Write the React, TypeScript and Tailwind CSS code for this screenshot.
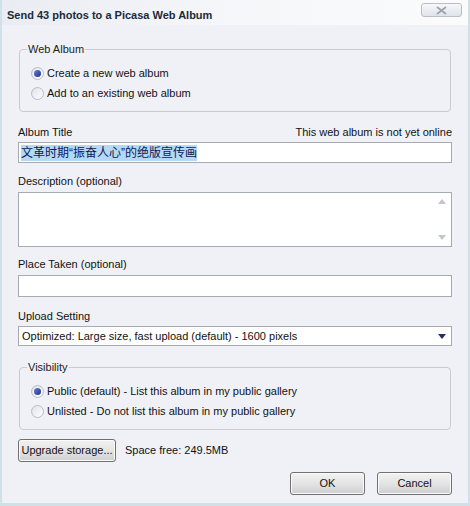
import React from "react";

const font = { fontFamily: '"Liberation Sans", "Noto Sans CJK SC", Arial, sans-serif' };

function Radio({ checked, label }: { checked?: boolean; label: string }) {
  return (
    <div className="flex h-[20px] items-center gap-[3px] pl-[11px]">
      <span className="flex h-[13px] w-[13px] items-center justify-center rounded-full border border-[#b8bcc4] bg-gradient-to-br from-[#dfe2e8] to-white">
        {checked && (
          <span className="h-[7px] w-[7px] rounded-full bg-gradient-to-br from-[#6f7fd6] to-[#1c2f8a]" />
        )}
      </span>
      <span className="text-[11px] text-[#111]">{label}</span>
    </div>
  );
}

function Group({ title, children, className }: { title: string; children: React.ReactNode; className?: string }) {
  return (
    <div className={"relative ml-[1px] w-[432px] rounded-[4px] border border-[#c9cbd0] pt-[13px] " + (className ?? "")}>
      <span className="absolute -top-[8px] left-[7px] bg-[#f0f1f7] px-[1px] text-[11px] leading-[14px] text-[#222]">
        {title}
      </span>
      {children}
    </div>
  );
}

function Button({ children, className }: { children: React.ReactNode; className?: string }) {
  return (
    <button
      className={
        "flex items-center justify-center whitespace-nowrap rounded-[3px] border border-[#707070] bg-gradient-to-b from-[#f2f2f2] via-[#e4e4e4] to-[#cfcfcf] text-[11px] text-[#111] shadow-[inset_0_0_0_1px_#fbfbfb] " +
        (className ?? "")
      }
    >
      {children}
    </button>
  );
}

export default function App() {
  return (
    <div className="h-[506px] w-[470px] overflow-hidden bg-[#f0f1f7]" style={font}>
      <div className="flex h-full flex-col border-x-[2px] border-b-[3px] border-[#cfe0e6]">
        <div className="relative flex h-[25px] items-center bg-gradient-to-r from-[#e9ecf2] via-[#f6f7fa] to-[#fbfbfc] pl-[5px] pt-[5px]">
          <span className="text-[11px] font-bold text-[#1b2a3a]">Send 43 photos to a Picasa Web Album</span>
          <div className="absolute right-[6px] top-[3px] flex h-[14px] w-[41px] items-center justify-center rounded-[3px] border border-[#b9bec6] bg-gradient-to-b from-[#f7f8fa] to-[#dfe3ea]">
            <svg width="11" height="9" viewBox="0 0 11 9">
              <path d="M1 1 L10 8 M10 1 L1 8" stroke="#9aa2ad" strokeWidth="1.6" fill="none" />
            </svg>
          </div>
        </div>

        <div className="flex flex-col pl-[16px]">
          <Group title="Web Album" className="mt-[24px] h-[63px]">
            <Radio checked label="Create a new web album" />
            <Radio label="Add to an existing web album" />
          </Group>

          <div className="mt-[13px] flex w-[434px] justify-between text-[11px] leading-[14px] text-[#111]">
            <span>Album Title</span>
            <span>This web album is not yet online</span>
          </div>
          <div className="mt-[3px] flex h-[21px] w-[434px] items-center border border-[#a5abb3] bg-white px-[2px]">
            <span className="bg-[#b5d8f5] text-[12px] leading-[16px] text-[#0a1a5a]">文革时期“振奋人心”的绝版宣传画</span>
          </div>

          <div className="mt-[11px] text-[11px] leading-[14px] text-[#111]">Description (optional)</div>
          <div className="mt-[4px] flex h-[55px] w-[434px] justify-end border border-[#a5abb3] bg-white">
            <div className="flex w-[16px] flex-col items-center justify-between py-[6px] pr-[2px]">
              <svg width="8" height="5" viewBox="0 0 8 5"><path d="M0 5 L4 0 L8 5 Z" fill="#c3c6cc" /></svg>
              <svg width="8" height="5" viewBox="0 0 8 5"><path d="M0 0 L4 5 L8 0 Z" fill="#c3c6cc" /></svg>
            </div>
          </div>

          <div className="mt-[10px] text-[11px] leading-[14px] text-[#111]">Place Taken (optional)</div>
          <div className="mt-[4px] h-[22px] w-[434px] border border-[#a5abb3] bg-white" />

          <div className="mt-[12px] text-[11px] leading-[14px] text-[#111]">Upload Setting</div>
          <div className="mt-[3px] flex h-[20px] w-[434px] items-center justify-between border border-[#a5abb3] bg-white pl-[3px] pr-[5px]">
            <span className="text-[11px] text-[#111]">Optimized: Large size, fast upload (default) - 1600 pixels</span>
            <svg width="8" height="5" viewBox="0 0 8 5"><path d="M0 0 L4 5 L8 0 Z" fill="#1f2f6b" /></svg>
          </div>

          <Group title="Visibility" className="mt-[21px] h-[63px]">
            <Radio checked label="Public (default) - List this album in my public gallery" />
            <Radio label="Unlisted - Do not list this album in my public gallery" />
          </Group>

          <div className="mt-[9px] flex items-center gap-[9px]">
            <Button className="h-[23px] w-[98px]">Upgrade storage...</Button>
            <span className="text-[11px] text-[#111]">Space free: 249.5MB</span>
          </div>

          <div className="mt-[10px] flex w-[434px] justify-end gap-[12px]">
            <Button className="h-[23px] w-[75px]">OK</Button>
            <Button className="h-[23px] w-[75px]">Cancel</Button>
          </div>
        </div>
      </div>
    </div>
  );
}
